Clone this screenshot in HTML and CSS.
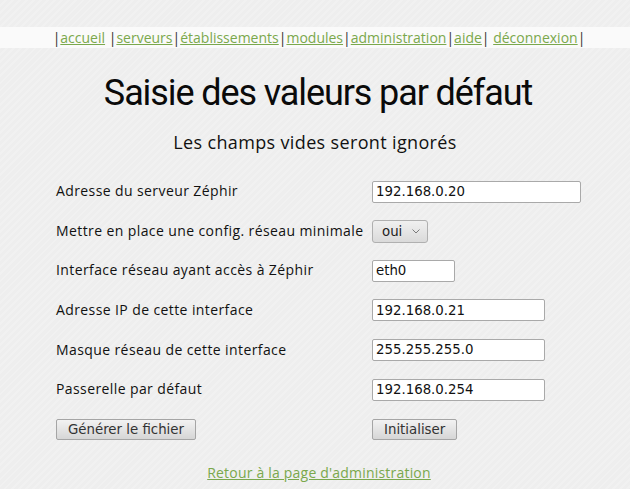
FILE: index.html
```html
<!DOCTYPE html>
<html lang="fr">
<head>
<meta charset="utf-8">
<title>Saisie des valeurs par défaut</title>
<link rel="stylesheet" href="styles.css">
</head>
<body>
<div class="menu">
  |<a href="#">accueil</a> |<a href="#">serveurs</a>|<a href="#">établissements</a>|<a href="#">modules</a>|<a href="#">administration</a>|<a href="#">aide</a>| <a href="#">déconnexion</a>|
</div>
<h1 class="title">Saisie des valeurs par défaut</h1>
<h2 class="subtitle">Les champs vides seront ignorés</h2>
<form class="form">
  <table class="grid">
    <tr><td class="label">Adresse du serveur Zéphir</td><td><input class="field w-long" type="text" value="192.168.0.20"></td></tr>
    <tr><td class="label">Mettre en place une config. réseau minimale</td><td><span class="select-wrap"><select class="choice"><option>oui</option><option>non</option></select><svg class="chevron" width="8" height="5" viewBox="0 0 8 5"><path d="M0.5 0.5 L4 4 L7.5 0.5" fill="none" stroke="#7a7a7a" stroke-width="1"/></svg></span></td></tr>
    <tr><td class="label">Interface réseau ayant accès à Zéphir</td><td><input class="field w-short" type="text" value="eth0"></td></tr>
    <tr><td class="label">Adresse IP de cette interface</td><td><input class="field w-mid" type="text" value="192.168.0.21"></td></tr>
    <tr><td class="label">Masque réseau de cette interface</td><td><input class="field w-mid" type="text" value="255.255.255.0"></td></tr>
    <tr><td class="label">Passerelle par défaut</td><td><input class="field w-mid" type="text" value="192.168.0.254"></td></tr>
    <tr><td><button type="button" class="btn">Générer le fichier</button></td><td><button type="reset" class="btn">Initialiser</button></td></tr>
  </table>
</form>
<p class="back"><a href="#">Retour à la page d'administration</a></p>
</body>
</html>
```
FILE: styles.css
```css
html, body {
  margin: 0;
  padding: 0;
}
body {
  background-color: #ededed;
  background-image: repeating-linear-gradient(135deg, #eeeeee 0px, #eeeeee 3px, #f1f1f1 3px, #f1f1f1 5px);
  font-family: "Open Sans", sans-serif;
  color: #111;
  width: 630px;
  height: 489px;
  overflow: hidden;
}
.menu {
  margin-top: 27px;
  height: 21px;
  line-height: 21px;
  background: #fafafa;
  text-align: center;
  font-size: 14px;
  color: #333;
  letter-spacing: 0;
  padding-left: 8px;
}
.menu a {
  color: #7aa84c;
  text-decoration: underline;
}
.title {
  margin: 25px 0 0;
  text-align: center;
  font-family: Roboto, "Open Sans", sans-serif;
  font-size: 36px;
  font-weight: 400;
  line-height: 40px;
  letter-spacing: -1.1px;
  color: #0a0a0a;
  padding-left: 6px;
}
.subtitle {
  margin: 17px 0 0;
  text-align: center;
  font-size: 18px;
  font-weight: 500;
  line-height: 24px;
  letter-spacing: 0.35px;
  color: #111;
}
.form {
  margin: 17px 0 0 56px;
}
.grid {
  border-collapse: collapse;
}
.grid td {
  padding: 0;
  height: 39.6px;
  vertical-align: middle;
}
.grid .label {
  width: 316px;
  font-size: 14px;
  letter-spacing: 0.4px;
}
.field {
  box-sizing: border-box;
  height: 22px;
  font-family: "DejaVu Sans", sans-serif;
  font-size: 13.33px;
  color: #111;
  border: 1px solid #a9a9a9;
  border-radius: 2px;
  background: #fff;
  padding: 1px 3px;
  margin: 0;
}
.w-long { width: 209px; }
.w-mid { width: 173px; }
.w-short { width: 83px; }
.select-wrap {
  position: relative;
  display: inline-block;
  vertical-align: middle;
}
.choice {
  -webkit-appearance: none;
  appearance: none;
  box-sizing: border-box;
  height: 23px;
  width: 56px;
  font-family: "DejaVu Sans", sans-serif;
  font-size: 13.33px;
  color: #222;
  border: 1px solid #b0b0b0;
  border-radius: 3px;
  background: linear-gradient(#f0f0f0, #dadada);
  padding: 0 0 0 9px;
  margin: 0;
  display: block;
}
.chevron {
  position: absolute;
  right: 8px;
  top: 9px;
  pointer-events: none;
}
.btn {
  box-sizing: border-box;
  height: 21px;
  font-family: "DejaVu Sans", sans-serif;
  font-size: 13.33px;
  color: #333;
  border: 1px solid #a5a5a5;
  border-radius: 2px;
  background: linear-gradient(#f2f2f2, #d6d6d6);
  padding: 0 11px;
  margin: 0;
}
.back {
  margin: 15px 0 0;
  padding-left: 8px;
  text-align: center;
  font-size: 14px;
  letter-spacing: 0.2px;
}
.back a {
  color: #7aa84c;
}
```
